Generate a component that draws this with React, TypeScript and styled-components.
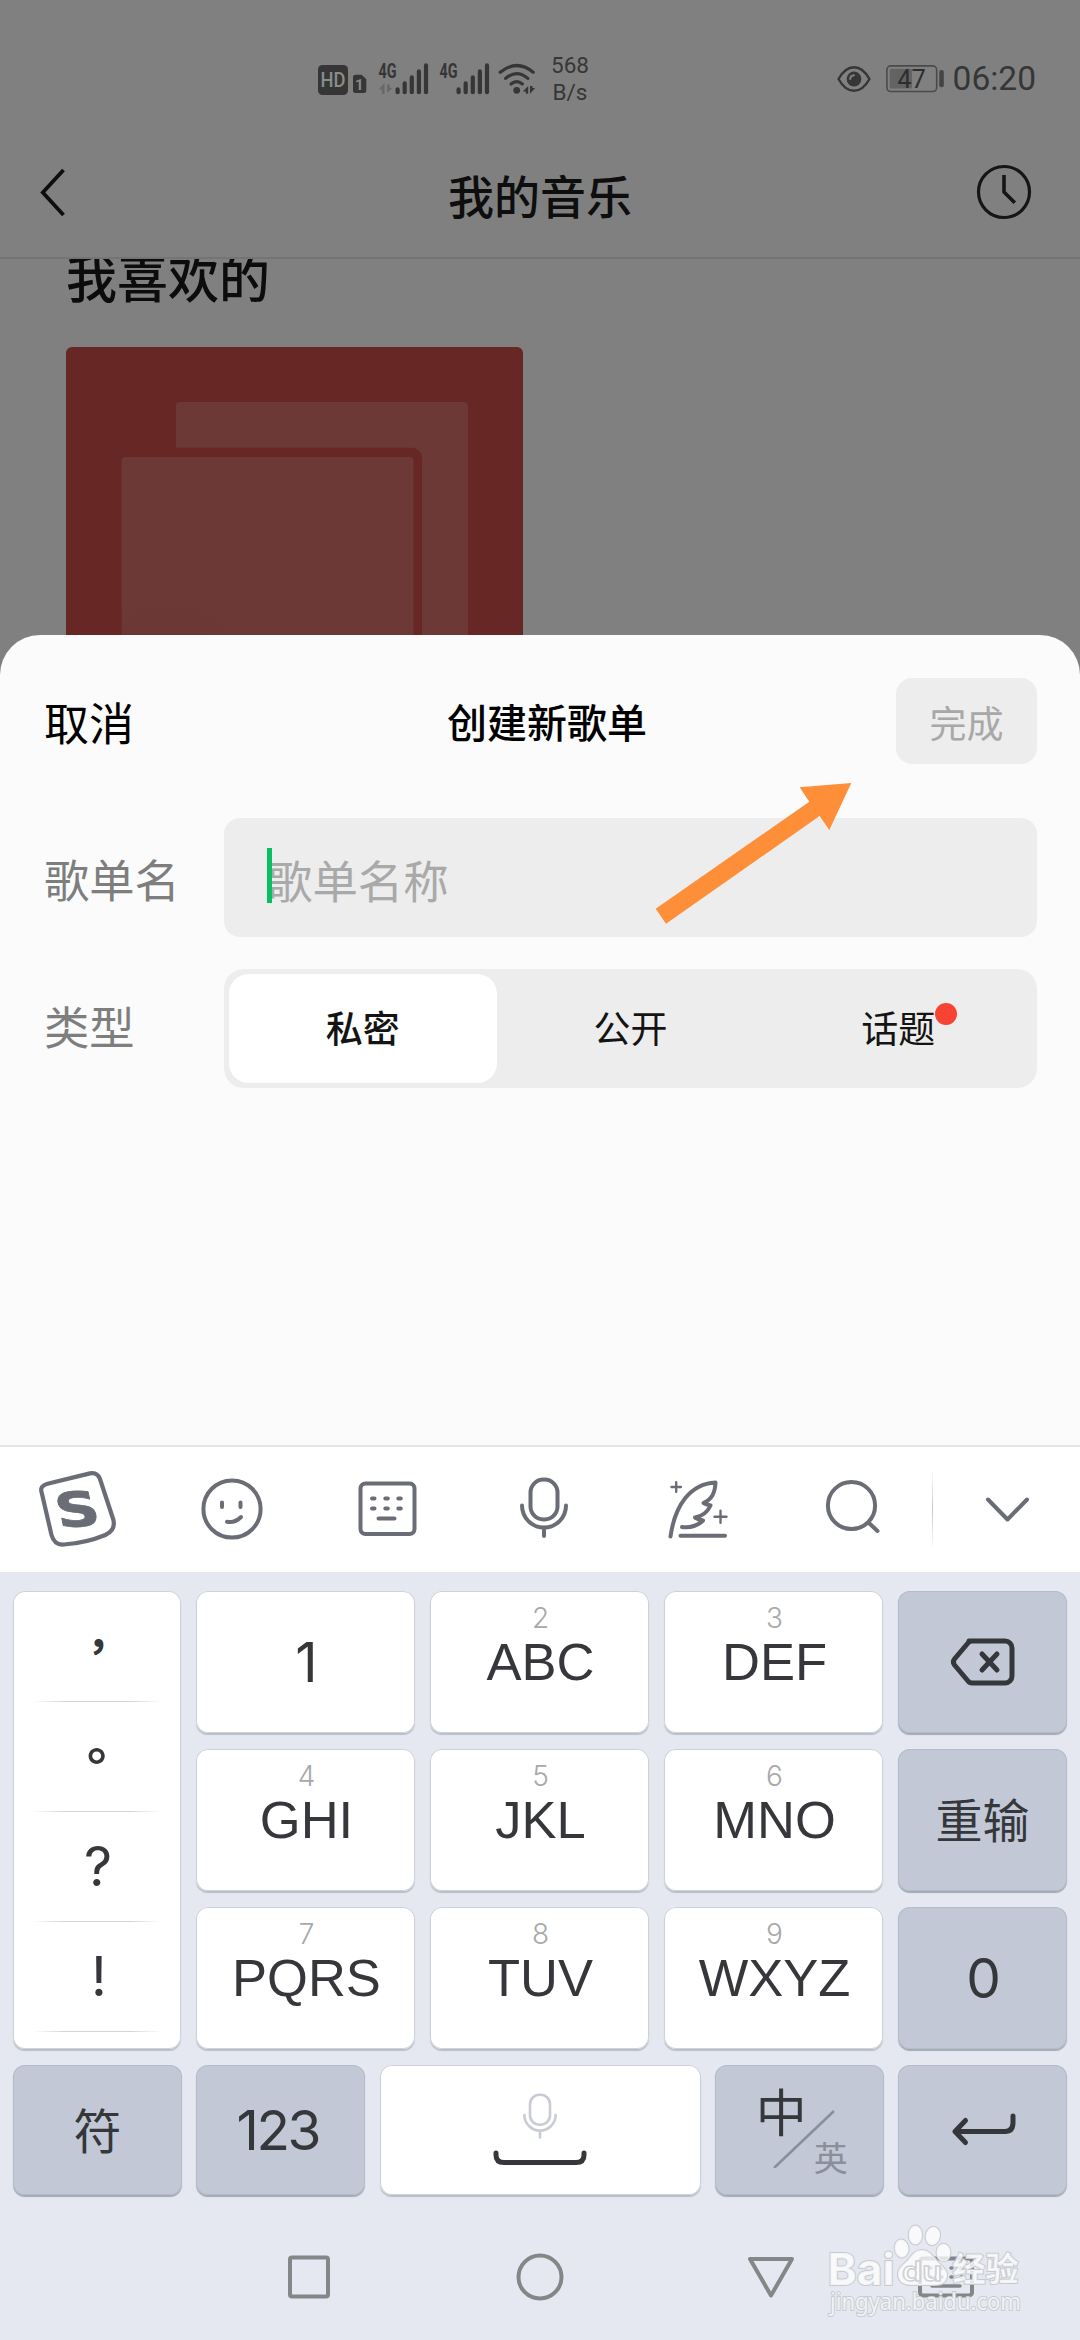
import React from 'react';
import styled, { createGlobalStyle, css } from 'styled-components';

const cjk = '"Noto Sans CJK SC", "Noto Sans", sans-serif';
const latin = '"Liberation Sans", "Noto Sans CJK SC", sans-serif';
const ink = '#35373b';
const toolInk = '#6a6d75';
const navInk = '#858688';

const GlobalStyle = createGlobalStyle`
  html, body { margin: 0; padding: 0; background: #808080; }
  * { box-sizing: border-box; }
  button { border: 0; margin: 0; padding: 0; background: none; font: inherit; color: inherit; }
`;

const Phone = styled.div`
  position: relative;
  width: 1080px;
  height: 2340px;
  overflow: hidden;
  display: flex;
  flex-direction: column;
  background: #808080;
  font-family: ${cjk};
`;

/* ---------- dimmed page ---------- */

const StatusBar = styled.div`
  height: 126px;
  padding: 32px 44px 0 318px;
  display: flex;
  align-items: center;
  color: #363636;
  font-family: Roboto, sans-serif;
`;

const NetSpeed = styled.div`
  width: 42px;
  margin-left: 12px;
  font-size: 22.5px;
  line-height: 27px;
  text-align: center;
  white-space: pre-line;
`;

const StatusRight = styled.div`
  margin-left: auto;
  display: flex;
  align-items: center;
`;

const StatusEye = styled.svg`
  margin-right: 15px;
`;

const Clock = styled.span`
  margin-left: 9px;
  font-size: 33.5px;
  line-height: 36px;
`;

const Header = styled.header`
  flex: none;
  height: 133px;
  padding: 0 48px 0 40px;
  display: grid;
  grid-template-columns: 56px 1fr 56px;
  align-items: center;
  border-bottom: 2px solid #747474;
`;

const HeaderTitle = styled.h1`
  margin: 0 -8px 0 0;
  padding: 4px 0 0 0;
  font-size: 46px;
  line-height: 60px;
  font-weight: 500;
  text-align: center;
  color: #0e0e0e;
`;

const Feed = styled.main`
  flex: none;
  height: 376px;
  padding: 0 66px;
  overflow: hidden;
`;

const SectionTitle = styled.h2`
  margin: -13px 0 40px;
  font-size: 51px;
  line-height: 61px;
  font-weight: 500;
  color: #0c0c0c;
`;

const Cover = styled.svg`
  display: block;
`;

/* ---------- sheet ---------- */

const Sheet = styled.section`
  flex: none;
  height: 812px;
  padding: 43px 43px 0 44px;
  border-radius: 40px 40px 0 0;
  background: #fbfbfb;
  border-bottom: 2px solid #e5e6e7;
`;

const SheetBar = styled.div`
  height: 86px;
  display: grid;
  grid-template-columns: 141px 1fr 141px;
  align-items: center;
`;

const Cancel = styled.button`
  padding-top: 2px;
  font-size: 45px;
  line-height: 60px;
  text-align: left;
  color: #000;
`;

const SheetTitle = styled.h2`
  margin: 0 -13px 0 0;
  font-size: 40px;
  line-height: 56px;
  font-weight: 500;
  text-align: center;
  color: #000;
`;

const Done = styled.button`
  height: 86px;
  border-radius: 16px;
  background: #ededed;
  color: #a8a8a8;
  font-size: 37px;
  line-height: 50px;
  padding-top: 1px;
`;

const Row = styled.div<{ $gap: number }>`
  height: 119px;
  margin-top: ${(p) => p.$gap}px;
  display: grid;
  grid-template-columns: 180px 1fr;
  align-items: center;
`;

const Label = styled.span<{ $lift?: number }>`
  font-size: 45.300px;
  line-height: 60px;
  color: #7e7e7e;
  padding-bottom: ${(p) => p.$lift ?? 0}px;
`;

const Field = styled.div`
  height: 119px;
  padding: 2px 0 0 45px;
  border-radius: 16px;
  display: flex;
  align-items: center;
  background: #ededed;
  font-size: 45.400px;
  line-height: 60px;
  color: #a9a9a9;
`;

const Caret = styled.i`
  width: 5px;
  height: 55px;
  margin: -7px -5px 0 -2px;
  background: #07c160;
  z-index: 1;
`;

const Segments = styled.div`
  height: 119px;
  padding: 5px;
  border-radius: 20px;
  display: grid;
  grid-template-columns: repeat(3, 1fr);
  background: #ededed;
`;

const Segment = styled.button<{ $on?: boolean }>`
  padding-bottom: 3px;
  border-radius: 20px;
  display: flex;
  align-items: center;
  justify-content: center;
  background: ${(p) => (p.$on ? '#fff' : 'transparent')};
  font-size: 37px;
  line-height: 50px;
  font-weight: ${(p) => (p.$on ? 500 : 400)};
  color: #141414;
`;

const Dotted = styled.span`
  position: relative;
`;

const Dot = styled.i`
  position: absolute;
  left: 100%;
  top: 1px;
  width: 22px;
  height: 22px;
  border-radius: 50%;
  background: #f74334;
`;

const Pointer = styled.svg`
  position: absolute;
  left: 650px;
  top: 778px;
`;

/* ---------- keyboard ---------- */

const Tools = styled.div`
  flex: none;
  height: 125px;
  display: grid;
  grid-template-columns: repeat(6, 155.4px) 1fr;
  background: #fff;
`;

const Tool = styled.button`
  display: flex;
  align-items: center;
  justify-content: center;
`;

const Collapse = styled(Tool)`
  border-left: 1.5px solid;
  border-image: linear-gradient(#fff 18%, #c6c8ce 50%, #fff 82%) 1;
`;

const Pad = styled.div`
  flex: none;
  height: 768px;
  padding: 19px 13px 0;
  background: #e5e8f0;
`;

const Keys = styled.div`
  display: grid;
  grid-template-columns: 168px 219px 219px 219px 169px;
  grid-template-rows: repeat(3, 142px);
  gap: 16px 15px;
`;

const BottomKeys = styled.div`
  margin-top: 16px;
  display: grid;
  grid-template-columns: 169px 169px 321px 169px 169px;
  grid-template-rows: 130px;
  column-gap: 14.25px;
`;

const keyFace = css<{ $grey?: boolean }>`
  border-radius: 12px;
  background: ${(p) => (p.$grey ? '#c2c8d6' : '#fff')};
  box-shadow: 0 0 0 1px ${(p) => (p.$grey ? '#b4bdcb' : '#cdd1da')} inset,
    0 2px 1px ${(p) => (p.$grey ? '#a3a9b5' : '#b9bec9')};
  color: ${ink};
`;

const Key = styled.button<{ $grey?: boolean }>`
  ${keyFace}
  display: flex;
  flex-direction: column;
  align-items: center;
  justify-content: center;
  font-family: ${latin};
`;

const LetterKey = styled(Key)`
  justify-content: flex-start;
  padding: 11px 0 0 2px;
`;

const Digit = styled.span`
  font: 300 28px/32px Inter, sans-serif;
  color: #a8a8a8;
`;

const Letters = styled.span`
  margin-top: -2px;
  font-size: 52.500px;
  line-height: 60px;
`;

const Numeral = styled.span<{ $tight?: boolean }>`
  padding-left: 2px;
  font: 400 55px/60px Inter, sans-serif;
  ${(p) => p.$tight && css`
    padding: 0 6px 0 0;
    letter-spacing: -2.500px;
  `}
`;

const Word = styled.span<{ $size: number }>`
  padding-bottom: 4px;
  font-family: ${cjk};
  font-size: ${(p) => p.$size}px;
  line-height: 60px;
`;

const Symbols = styled.div`
  ${keyFace}
  grid-row: 1 / span 3;
  padding: 1px 20px 0;
`;

const Symbol = styled.div`
  height: 110px;
  display: flex;
  align-items: center;
  justify-content: center;
  border-bottom: 1.500px solid;
  border-image: linear-gradient(90deg, #fff, #cfd5d8 25%, #cfd5d8 75%, #fff) 1;
  font: 400 55px/60px Inter, sans-serif;
`;

const Mark = styled.span<{ $x: number; $y: number; $cjk?: number }>`
  ${(p) => p.$cjk && css`
    font-family: ${cjk};
    font-size: ${p.$cjk}px;
    font-weight: 700;
  `}
  transform: translate(${(p) => p.$x}px, ${(p) => p.$y}px);
`;

const LangKey = styled(Key)`
  position: relative;
`;

const Slash = styled.svg`
  margin: 15px 0 0 12px;
`;

const LangText = styled.span<{ $minor?: boolean }>`
  position: absolute;
  left: ${(p) => (p.$minor ? 99 : 41)}px;
  top: ${(p) => (p.$minor ? 74 : 15)}px;
  font-family: ${cjk};
  font-size: ${(p) => (p.$minor ? 34 : 51)}px;
  line-height: ${(p) => (p.$minor ? 36 : 60)}px;
  color: ${(p) => (p.$minor ? '#8a8f9c' : ink)};
`;

const NavRow = styled.nav`
  height: 163px;
  padding: 0 55px 0 219px;
  display: grid;
  grid-template-columns: 154px 308px 154px 196px;
  align-items: center;
  justify-items: center;
`;

const Watermark = styled.svg`
  position: absolute;
  left: 820px;
  top: 2218px;
`;

type IconProps = { size?: number; w?: number; color?: string; children: React.ReactNode };

/* Line icon drawn around its own centre. */
const Icon = ({ size = 80, w = 4, color = toolInk, children }: IconProps) => (
  <svg
    width={size}
    height={size}
    viewBox={`${-size / 2} ${-size / 2} ${size} ${size}`}
    fill="none"
    stroke={color}
    strokeWidth={w}
    strokeLinecap="round"
    strokeLinejoin="round"
  >
    {children}
  </svg>
);

const Bars = ({ x }: { x: number }) => (
  <g>
    {[7, 13, 19, 25, 31].map((h, i) => (
      <rect key={h} x={x + i * 7.1} y={33.3 - h} width="4.2" height={h} rx="2.1" />
    ))}
  </g>
);

const StatusIcons = () => (
  <svg width="219" height="36" viewBox="0 0 219 36" fill="#363636">
    <rect x="0" y="4" width="30" height="30" rx="4.5" />
    <text x="15" y="26" textAnchor="middle" fontFamily="Roboto" fontWeight="500" fontSize="20" textLength="25" lengthAdjust="spacingAndGlyphs" fill="#8c8c8c">HD</text>
    <path d="M37.5 13.7h6.2l4.6 4.6v11.2a2.5 2.5 0 0 1-2.5 2.5h-8.3a2.5 2.5 0 0 1-2.5-2.5v-13.3a2.5 2.5 0 0 1 2.5-2.5z" />
    <text x="41.3" y="28.5" textAnchor="middle" fontFamily="Roboto" fontWeight="700" fontSize="15" fill="#8a8a8a">1</text>
    <text x="60.5" y="16.7" fontFamily="Roboto" fontWeight="700" fontSize="19.5" textLength="18" lengthAdjust="spacingAndGlyphs">4G</text>
    <g fill="#686868">
      <path d="M66.500 22v11h-2.600v-4.500H60.600z" />
      <path d="M68.500 22v8.500l5.500-5h-2.700V22z" transform="translate(0.500 1.500)" />
    </g>
    <Bars x={77.5} />
    <text x="121.5" y="16.7" fontFamily="Roboto" fontWeight="700" fontSize="19.5" textLength="18" lengthAdjust="spacingAndGlyphs">4G</text>
    <Bars x={138.5} />
    <g fill="none" stroke="#363636" strokeWidth="3.2" strokeLinecap="round">
      <path d="M182.2 11.300Q198.700-2.300 215.200 11.300" />
      <path d="M187.600 17.400Q198.700 8 209.800 17.400" />
      <path d="M193 23Q198.700 18.300 204.400 23" />
    </g>
    <circle cx="198.7" cy="29.3" r="3.4" />
    <path d="M204.7 30.500l5.500-5.500v7.700h-2.400v-2.200z" />
    <path d="M212 25v7.700l5.200-5.600h-2.700V25z" />
  </svg>
);

const Eye = () => (
  <StatusEye width="34" height="28" viewBox="-17 -14 34 28">
    <path d="M-15.500 0Q-9-11.800 0-11.800T15.500 0Q9 11.800 0 11.800T-15.500 0z" fill="none" stroke="#363636" strokeWidth="2.400" strokeLinejoin="round" />
    <circle r="7.400" fill="#363636" />
    <path d="M-3.800 0Q-3.600-3.600 0-3.800" fill="none" stroke="#808080" strokeWidth="2" strokeLinecap="round" />
  </StatusEye>
);

const Battery = () => (
  <svg width="58" height="28" viewBox="0 0 58 28">
    <rect x="0.9" y="0.9" width="49.8" height="25.6" rx="4" fill="none" stroke="#4a4a4a" strokeWidth="1.6" />
    <rect x="3.7" y="3.7" width="22.3" height="19.8" rx="1.5" fill="#636363" />
    <rect x="53.3" y="5" width="4.5" height="17.2" rx="2" fill="#444" />
    <text x="25.5" y="22.5" textAnchor="middle" fontFamily="Roboto" fontSize="25.5" fill="#2e2e2e">47</text>
  </svg>
);

const LETTERS: [string, string][][] = [
  [['', '1'], ['2', 'ABC'], ['3', 'DEF']],
  [['4', 'GHI'], ['5', 'JKL'], ['6', 'MNO']],
  [['7', 'PQRS'], ['8', 'TUV'], ['9', 'WXYZ']],
];

const sideKeys = [
  <Icon key="del" w={5} color={ink}>
    <path d="M-14-21H22a7 7 0 0 1 7 7V14a7 7 0 0 1-7 7H-11a5 5 0 0 1-4-2L-28.500 3a5 5 0 0 1 0-6L-15-19a5 5 0 0 1 4-2" />
    <path d="M-1-8L14 8M14-8L-1 8" />
  </Icon>,
  <Word key="redo" $size={47}>重输</Word>,
  <Numeral key="zero">0</Numeral>,
];

export default function App() {
  return (
    <>
      <GlobalStyle />
      <Phone>
        <StatusBar>
          <StatusIcons />
          <NetSpeed>{'568\nB/s'}</NetSpeed>
          <StatusRight>
            <Eye />
            <Battery />
            <Clock>06:20</Clock>
          </StatusRight>
        </StatusBar>
        <Header>
          <svg width="28" height="50" viewBox="0 0 28 50" fill="none" stroke="#0e0e0e" strokeWidth="3.8">
            <path d="M23.500 3L2.800 25.500L23.500 48" />
          </svg>
          <HeaderTitle>我的音乐</HeaderTitle>
          <svg width="56" height="56" viewBox="-28 -28 56 56" fill="none" stroke="#151515" strokeWidth="3.2">
            <circle r="25.5" />
            <path d="M0-17V0L10.800 10.800" strokeWidth="3.6" />
          </svg>
        </Header>
        <Feed>
          <SectionTitle>我喜欢的</SectionTitle>
          <Cover width="458" height="458" viewBox="0 0 458 458">
            <defs>
              <radialGradient id="shade" cx="100" cy="345" r="120" gradientUnits="userSpaceOnUse">
                <stop offset="0" stopColor="#672724" stopOpacity="0.300" />
                <stop offset="1" stopColor="#6c3936" stopOpacity="0" />
              </radialGradient>
            </defs>
            <rect width="457" height="458" rx="6" fill="#672724" />
            <rect x="110" y="55" width="292" height="400" rx="4" fill="#6c3936" />
            <path d="M50 100.700H346a10 10 0 0 1 10 10V458H50z" fill="#672724" />
            <rect x="55.6" y="110" width="292" height="348" rx="4" fill="#6c3936" />
            <rect x="55.6" y="110" width="292" height="348" fill="url(#shade)" />
          </Cover>
        </Feed>

        <Sheet>
          <SheetBar>
            <Cancel>取消</Cancel>
            <SheetTitle>创建新歌单</SheetTitle>
            <Done>完成</Done>
          </SheetBar>
          <Row $gap={54}>
            <Label>歌单名</Label>
            <Field>
              <Caret />
              歌单名称
            </Field>
          </Row>
          <Row $gap={32}>
            <Label $lift={7}>类型</Label>
            <Segments>
              <Segment $on>私密</Segment>
              <Segment>公开</Segment>
              <Segment>
                <Dotted>
                  话题
                  <Dot />
                </Dotted>
              </Segment>
            </Segments>
          </Row>
        </Sheet>

        <Tools>
          <Tool>
            <Icon w={4.2}>
              <path d="M-36.400-17.800L-26.500 25Q-23.500 35.500-14 34.500Q8 33 27.300 25Q38 20 35.300 9.500L21.800-31.500Q19-38 12-36.600L-30.500-26.200Q-38.500-24-36.400-17.800z" />
              <text
                transform="rotate(-4) skewX(8) scale(1.260 1)"
                x="-0.5"
                y="16.5"
                textAnchor="middle"
                fontFamily="DejaVu Sans"
                fontWeight="700"
                fontSize="48"
                fill={toolInk}
                strokeWidth="0.8"
              >
                S
              </text>
            </Icon>
          </Tool>
          <Tool>
            <Icon>
              <circle cx="-1" cy="-1" r="28.6" />
              <path d="M-11-7.500v4.500M7.500-7.500v4.500M-6 11.700Q1.500 13.500 8 7" />
            </Icon>
          </Tool>
          <Tool>
            <Icon>
              <rect x="-27.5" y="-26.5" width="54" height="50.5" rx="5" />
              <path d="M-16-11.500h2.500M-2.700-11.500h2.500M10.300-11.500h2.500M-16-1.500h2.500M-2.700-1.500h2.500M10.300-1.500h2.500M-9.500 8.500h16" />
            </Icon>
          </Tool>
          <Tool>
            <Icon>
              <rect x="-13.5" y="-30.5" width="27" height="40" rx="13" />
              <path d="M-22-4.500a22 22 0 0 0 44 0M0 18v8" />
            </Icon>
          </Tool>
          <Tool>
            <Icon>
              <path d="M-28.500 26.500C-24-5-9-26 16.500-27.500C16-17 13-11 4.500-7Q7-5.500 11.500-4.500Q7 5.500-4 7.500Q-1 9.500 4 10.500Q-4 18.500-17 17" />
              <path d="M-18.500 25.700H26" />
              <path d="M-27.500-23h9.400M-22.800-27.700v9.400M15.500 6.700h12M21.500 0.700v12" strokeWidth="2.4" />
            </Icon>
          </Tool>
          <Tool>
            <Icon>
              <circle cx="-3.5" cy="-4.5" r="23.6" />
              <path d="M13.700 12.700L22.500 21" />
            </Icon>
          </Tool>
          <Collapse>
            <Icon>
              <path d="M-19-10.500L0.500 9.500L20-10.500" />
            </Icon>
          </Collapse>
        </Tools>

        <Pad>
          <Keys>
            <Symbols>
              <Symbol><Mark $cjk={43} $x={11} $y={-17}>，</Mark></Symbol>
              <Symbol><Mark $cjk={50} $x={15} $y={-19}>。</Mark></Symbol>
              <Symbol><Mark $x={1} $y={-1}>?</Mark></Symbol>
              <Symbol><Mark $x={2} $y={-1}>!</Mark></Symbol>
            </Symbols>
            {LETTERS.map((row, r) => (
              <React.Fragment key={r}>
                {row.map(([digit, label]) =>
                  digit ? (
                    <LetterKey key={label}>
                      <Digit>{digit}</Digit>
                      <Letters>{label}</Letters>
                    </LetterKey>
                  ) : (
                    <Key key={label}><Numeral>{label}</Numeral></Key>
                  ),
                )}
                <Key $grey>{sideKeys[r]}</Key>
              </React.Fragment>
            ))}
          </Keys>
          <BottomKeys>
            <Key $grey><Word $size={48}>符</Word></Key>
            <Key $grey><Numeral $tight>123</Numeral></Key>
            <Key>
              <svg width="100" height="80" viewBox="-50 0 100 80" fill="none" strokeLinecap="round">
                <g stroke="#c9ccd6" strokeWidth="2.6">
                  <rect x="-10" y="4.700" width="20" height="30" rx="9.5" />
                  <path d="M-15.600 25a15.600 15.600 0 0 0 31.200 0M0 41v6.500" />
                </g>
                <path d="M-44 63v2q0 7.500 8 7.500h72q8 0 8-7.500v-2" stroke={ink} strokeWidth="5" />
              </svg>
            </Key>
            <LangKey $grey>
              <LangText>中</LangText>
              <Slash width="64" height="60" viewBox="0 0 64 60" fill="none" stroke="#8a8f9c" strokeWidth="2.6">
                <path d="M1 60L61 3" />
              </Slash>
              <LangText $minor>英</LangText>
            </LangKey>
            <Key $grey>
              <Icon w={5} color={ink}>
                <path d="M-28 1.500H22q8 0 8-9V-14M-17.500-9.500L-28 1.500L-17.500 12.500" />
              </Icon>
            </Key>
          </BottomKeys>
          <NavRow>
            <Icon size={60} color={navInk}>
              <rect x="-19" y="-19.500" width="38" height="39" rx="2" />
            </Icon>
            <Icon size={60} color={navInk}>
              <circle r="21.5" />
            </Icon>
            <Icon size={60} color={navInk}>
              <path d="M-21-18H21L0 18.500z" />
            </Icon>
            <Icon size={60} color={navInk}>
              <rect x="-26" y="-18.500" width="52" height="37" rx="3" />
              <path d="M-16-9h1M-5-9h1M5-9h1M15-9h1M-16 0h1M-5 0h1M5 0h1M15 0h1M-14 9h28" strokeWidth="3.5" />
            </Icon>
          </NavRow>
        </Pad>

        <Pointer width="206" height="150" viewBox="650 778 206 150">
          <path d="M851.300 783L829.300 830L819.600 816L666 923.700L655.700 908.700L809.300 801.700L799.600 787.300z" fill="#ff8e38" />
        </Pointer>

        <Watermark width="216" height="106" viewBox="820 2218 216 106">
          <g fill="#fff" fillOpacity="0.75" stroke="#c9cbd2" strokeWidth="2" paintOrder="stroke">
            <ellipse cx="901.6" cy="2248.500" rx="7" ry="9" transform="rotate(-8 901.600 2248.500)" />
            <ellipse cx="915.4" cy="2235" rx="6.8" ry="9.600" />
            <ellipse cx="932.8" cy="2236" rx="7.2" ry="9.300" transform="rotate(12 932.800 2236)" />
            <ellipse cx="943.5" cy="2252.500" rx="7" ry="8.800" />
            <path d="M922 2250c8 0 11 7 16 12c6 6 10 9 9 15c-1 6-6 8-12 8h-24c-8 0-13-4-13-11c0-6 5-9 10-14c4-5 7-10 14-10z" />
            <text x="827.5" y="2284.500" fontFamily="Inter" fontWeight="700" fontSize="44" textLength="67" lengthAdjust="spacingAndGlyphs">Bai</text>
            <text x="952.5" y="2281" fontFamily="Noto Sans CJK SC" fontWeight="700" fontSize="33">经验</text>
            <text x="830" y="2309.500" fontFamily="Noto Sans" fontSize="23.5" textLength="191" lengthAdjust="spacingAndGlyphs">jingyan.baidu.com</text>
          </g>
          <text x="902" y="2280.500" fontFamily="Inter" fontWeight="600" fontSize="27" textLength="40" lengthAdjust="spacingAndGlyphs" fill="#fff" stroke="#cfd1d6" strokeWidth="1.5">du</text>
        </Watermark>
      </Phone>
    </>
  );
}
